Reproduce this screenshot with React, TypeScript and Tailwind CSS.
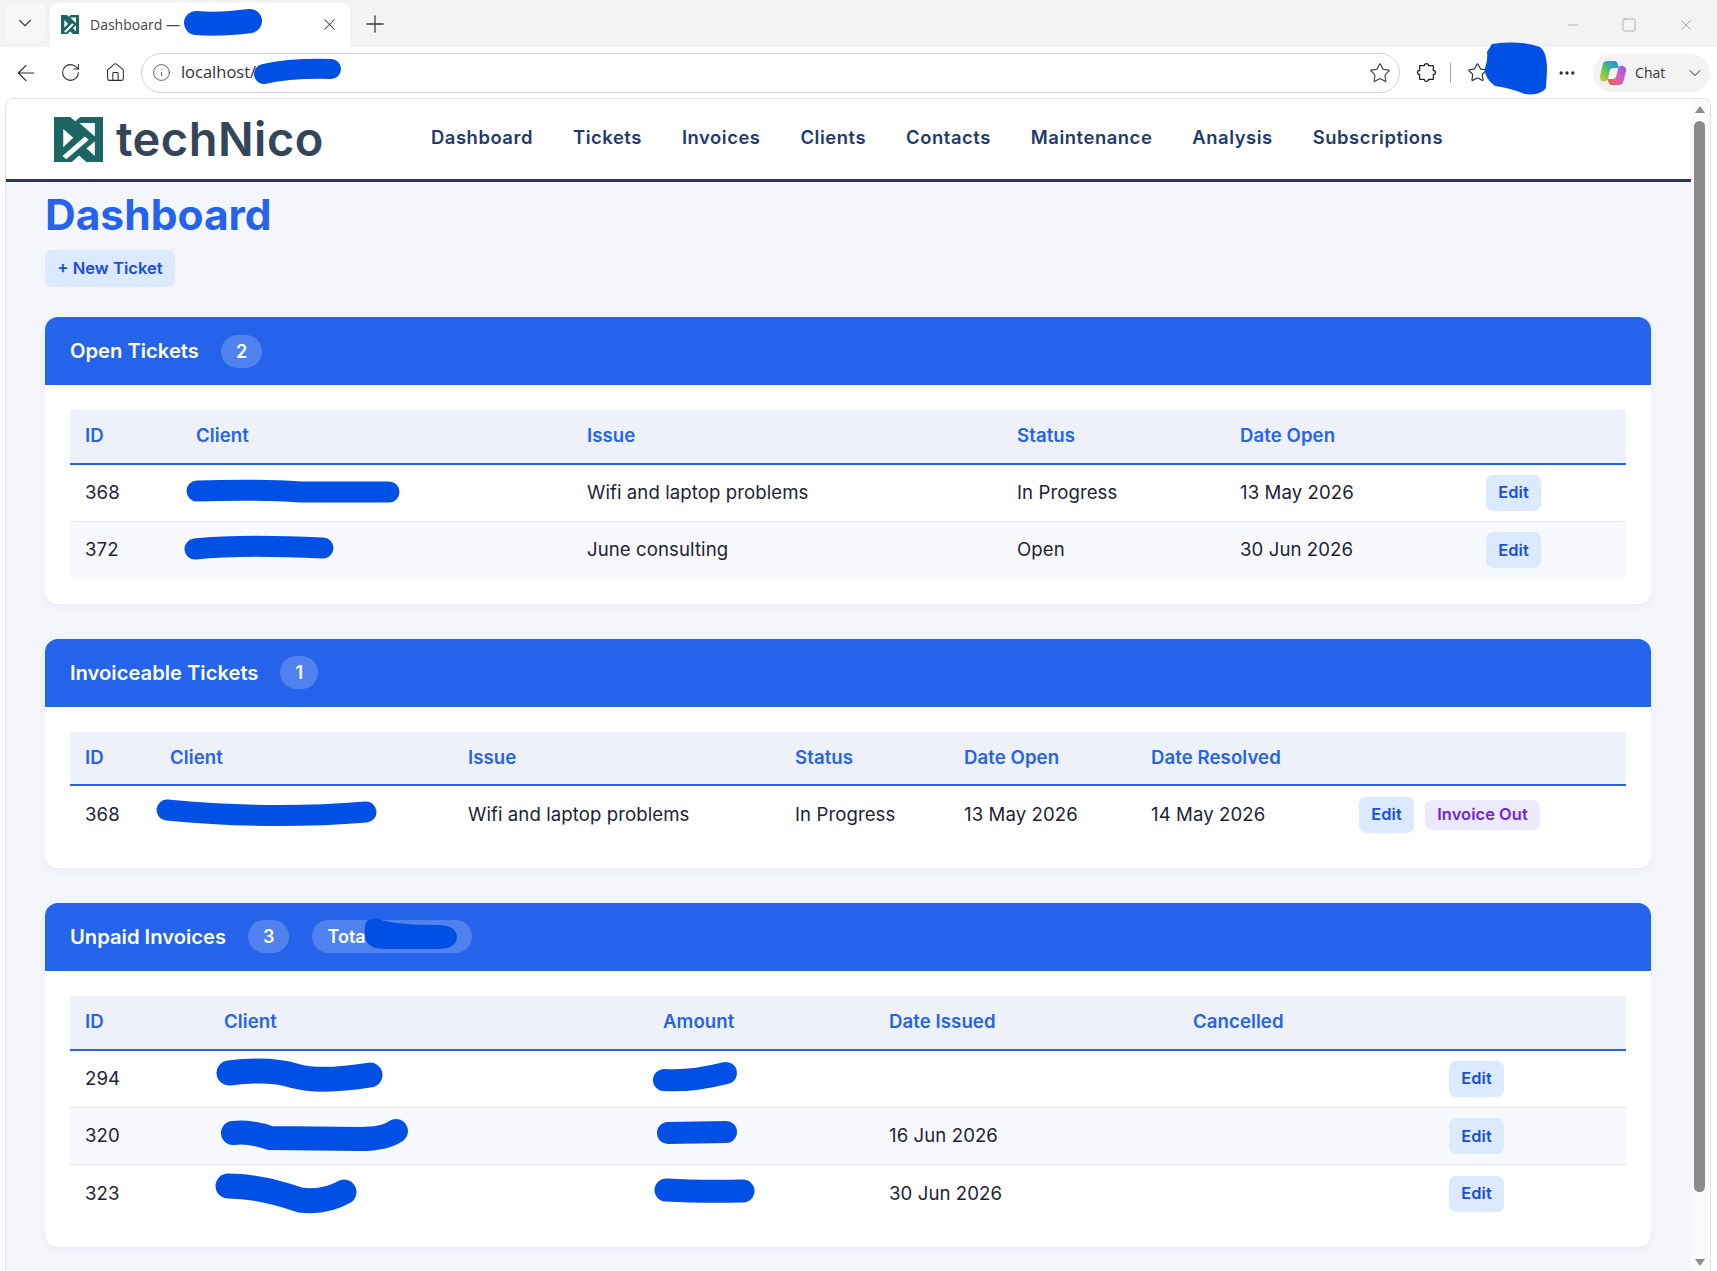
import { ArrowLeft, ChevronDown, Home, Info, Minus, MoreHorizontal, Plus, RotateCw, Square, Star, X } from 'lucide-react'

const NAV = ['Dashboard', 'Tickets', 'Invoices', 'Clients', 'Contacts', 'Maintenance', 'Analysis', 'Subscriptions']

function LogoMark({ className }: { className: string }) {
  return (
    <svg viewBox="0 0 127 134" preserveAspectRatio="none" className={className} fill="#ffffff">
      <rect width="127" height="134" fill="#1c6563" />
      <polygon points="42,0 68,0 55,13" />
      <polygon points="24,36 50,62 24,90" />
      <polygon points="22,116 80,58 90,68 32,126" />
      <polygon points="66,18 106,18 106,58" />
      <polygon points="106,72 106,116 84,94" />
      <polygon points="46,134 84,134 65,115" />
    </svg>
  )
}

function PuzzleIcon() {
  return (
    <svg viewBox="0 0 20 20" className="w-[21px] h-[21px]" fill="none" stroke="#1f1f1f" strokeWidth="1.15" strokeLinejoin="round">
      <path d="M8 3.500C8 .8 12 .8 12 3.500H16.500V8C19.200 8 19.200 12 16.500 12V16.500H12C12 19.200 8 19.200 8 16.500H3.500V12C.8 12 .8 8 3.500 8V3.500Z" />
    </svg>
  )
}

function CopilotIcon() {
  return (
    <svg viewBox="0 0 28 28" className="w-[28px] h-[28px]">
      <defs>
        <linearGradient id="cpL" x1="0" y1="1" x2="0.8" y2="0">
          <stop offset="0" stopColor="#f6c21c" />
          <stop offset="0.45" stopColor="#5fc75a" />
          <stop offset="1" stopColor="#1f8ee8" />
        </linearGradient>
        <linearGradient id="cpR" x1="1" y1="0" x2="0.1" y2="1">
          <stop offset="0" stopColor="#8f5be8" />
          <stop offset="0.5" stopColor="#d65cc4" />
          <stop offset="1" stopColor="#f0604a" />
        </linearGradient>
      </defs>
      <path d="M8 2h7.500c1.500 0 2.600 1 3 2.400L20 9h-5.500c-2 0-3.300 1-3.800 3L9 19.500c-.6 2-2 3-3.800 3C2.500 22.500.5 20 1 17L3.500 6C4 3.500 5.700 2 8 2z" fill="url(#cpL)" />
      <path d="M20 26h-7.500c-1.500 0-2.600-1-3-2.400L8.500 20h5c2 0 3.300-1 3.800-3l1.700-7c.5-2 2-3.200 3.800-3.200 2.800 0 4.700 2.500 4.200 5.200L24.500 22c-.5 2.500-2.200 4-4.500 4z" fill="url(#cpR)" />
    </svg>
  )
}

function TabStrip() {
  return (
    <div className="h-[47px] bg-[#f3f3f3] flex items-start pt-[3px] pl-[5px] pr-[22px] text-[#3b3b3b]">
      <div className="w-[40px] h-[40px] bg-[#f9f9f9] rounded-lg flex items-center justify-center">
        <ChevronDown className="w-[22px] h-[22px]" strokeWidth={1.2} />
      </div>
      <div className="ml-[5px] w-[300px] h-[44px] bg-white rounded-t-lg flex items-center pl-[11px] pr-[11px]">
        <LogoMark className="w-[18px] h-[19px] mb-[2px]" />
        <span className="ml-[11px] mb-[2px] text-[14px] font-['Open_Sans',sans-serif] text-[#444444]">Dashboard —</span>
        <X className="ml-auto mb-[2px] w-[19px] h-[19px]" strokeWidth={1.3} />
      </div>
      <Plus className="ml-[11px] mt-[7px] w-[28px] h-[28px]" strokeWidth={1.1} />
      <div className="ml-auto flex items-center h-[44px] gap-[40px] text-[#8f8f8f]">
        <Minus className="w-[16px] h-[16px]" strokeWidth={1} />
        <Square className="w-[16px] h-[16px]" strokeWidth={1} />
        <X className="w-[18px] h-[18px]" strokeWidth={1} />
      </div>
    </div>
  )
}

function Toolbar() {
  return (
    <div className="h-[51px] bg-white flex items-center pl-[13px] pr-[7px] text-[#2b2b2b]">
      <ArrowLeft className="w-[26px] h-[26px]" strokeWidth={1.05} />
      <RotateCw className="ml-[21px] w-[21px] h-[21px]" strokeWidth={1.2} />
      <Home className="ml-[24px] w-[21px] h-[21px]" strokeWidth={1.2} />
      <div className="ml-[15px] w-[1260px] h-[40px] rounded-full border border-[#d4d4d4] flex items-center pl-[10px] pr-[8px]">
        <Info className="w-[19px] h-[19px] text-[#555555]" strokeWidth={1.2} />
        <span className="ml-[10px] text-[16.500px] font-['Open_Sans',sans-serif] text-[#333333]">localhost/</span>
        <Star className="ml-auto w-[22px] h-[22px] text-[#3a3a3a]" strokeWidth={1.2} />
      </div>
      <div className="ml-[16px]">
        <PuzzleIcon />
      </div>
      <div className="ml-[13px] w-px h-[20px] bg-[#a8a8a8]" />
      <Star className="ml-[16px] w-[21px] h-[21px]" strokeWidth={1.3} />
      <MoreHorizontal className="ml-[69px] w-[20px] h-[20px]" strokeWidth={2} />
      <div className="ml-[16px] w-[117px] h-[38px] rounded-full bg-[#f3f3f3] flex items-center pl-[6px] pr-[5px]">
        <CopilotIcon />
        <span className="ml-[8px] text-[14px] font-['Open_Sans',sans-serif] text-[#333333]">Chat</span>
        <ChevronDown className="ml-auto w-[20px] h-[20px]" strokeWidth={1.2} />
      </div>
    </div>
  )
}

function SiteHeader() {
  return (
    <header className="h-[83px] shrink-0 bg-white border-b-[3px] border-[#1e3a6e] flex items-center pl-[48px]">
      <LogoMark className="w-[49px] h-[45px]" />
      <span className="ml-[13px] mb-[2px] w-[207px] text-[47px] leading-none font-semibold text-[#344558] tracking-[0.01em] whitespace-nowrap">techNico</span>
      <nav className="ml-[108px] flex gap-[40px] text-[18.4px] font-semibold text-[#1e3a6e] tracking-[0.03em] mb-[3px]">
        {NAV.map((item) => (
          <span key={item}>{item}</span>
        ))}
      </nav>
    </header>
  )
}

function Badge({ children, wide }: { children: React.ReactNode; wide?: boolean }) {
  return (
    <span className={`h-[33px] rounded-full bg-white/20 flex items-center text-[18px] font-semibold text-white ${wide ? 'w-[160px] px-[15px] ml-[1px]' : 'px-[15px]'}`}>
      {children}
    </span>
  )
}

function Card({ title, badges, children }: { title: string; badges: React.ReactNode; children: React.ReactNode }) {
  return (
    <section className="mb-[35px] rounded-[13px] bg-white shadow-[0_2px_10px_rgba(30,50,100,0.06)] overflow-hidden">
      <div className="h-[68px] bg-[#2563eb] px-[25px] flex items-center gap-[22px]">
        <h2 className="text-[20.2px] font-semibold text-white">{title}</h2>
        {badges}
      </div>
      <div className="p-[25px]">{children}</div>
    </section>
  )
}

function Edit() {
  return (
    <button className="w-[55px] h-[36px] rounded-[7px] bg-[#dbeafe] text-[16.400px] font-semibold text-[#1d4ed8]">Edit</button>
  )
}

function InvoiceOut() {
  return (
    <button className="ml-[11px] w-[115px] h-[30px] rounded-[7px] bg-[#ede9fe] text-[16.400px] font-semibold text-[#6d28d9]">Invoice Out</button>
  )
}

function DataTable({ cols, heads, rows }: { cols: number[]; heads: string[]; rows: React.ReactNode[][] }) {
  return (
    <table className="w-full table-fixed border-collapse text-[18.6px] tracking-[0.08px] text-[#1e2433]">
      <colgroup>
        {cols.map((w, i) => (
          <col key={i} style={{ width: w }} />
        ))}
      </colgroup>
      <thead>
        <tr className="h-[53.7px] bg-[#eef1f9] border-b-2 border-[#2563eb]">
          {heads.map((h, i) => (
            <th key={i} className="pl-[15px] text-left font-semibold text-[#2563eb]">{h}</th>
          ))}
        </tr>
      </thead>
      <tbody>
        {rows.map((row, r) => (
          <tr key={r} className={`h-[57.5px] ${r % 2 ? 'bg-[#f8f9fd]' : ''} ${r < rows.length - 1 ? 'border-b border-[#e2e6f0]' : ''}`}>
            {row.map((cell, c) => (
              <td key={c} className="pl-[15px]">{cell}</td>
            ))}
          </tr>
        ))}
      </tbody>
    </table>
  )
}

// the blue scribbles drawn over private values in the screenshot
function Redactions() {
  const strokes = [
    { d: 'M196 23 Q220 25 250 21', w: 24 },
    { d: 'M264 74 Q290 68 331 69', w: 20 },
    { d: 'M197 491 Q260 489 300 492 L389 492', w: 21 },
    { d: 'M195 549 Q240 544 323 548', w: 21 },
    { d: 'M167 810 Q270 820 366 812', w: 21 },
    { d: 'M229 1073 Q270 1068 295 1076 Q320 1083 370 1075', w: 25 },
    { d: 'M664 1080 Q690 1082 726 1073', w: 22 },
    { d: 'M233 1133 Q250 1131 270 1138 L360 1139 Q385 1139 396 1131', w: 24 },
    { d: 'M668 1133 L726 1132', w: 22 },
    { d: 'M228 1186 Q260 1186 300 1200 Q325 1203 344 1192', w: 25 },
    { d: 'M666 1190 Q700 1192 743 1191', w: 23 },
  ]
  return (
    <svg viewBox="0 0 1717 1271" className="absolute inset-0 w-[1717px] h-[1271px] pointer-events-none" fill="none" stroke="#0050e6" strokeLinecap="round">
      {strokes.map((s) => (
        <path key={s.d} d={s.d} strokeWidth={s.w} />
      ))}
      <path d="M1492 44 Q1520 40 1540 47 Q1547 52 1547 70 L1546 88 Q1540 96 1525 94 Q1510 88 1495 86 Q1484 78 1485 68 Q1488 60 1487 52 Z" fill="#0050e6" stroke="none" />
      <path d="M365 926 Q366 917 378 919 Q395 925 440 925 Q457 926 457 938 Q455 949 438 949 L385 949 Q368 949 365 938 Z" fill="#0050e6" stroke="none" />
    </svg>
  )
}

export default function App() {
  return (
    <div className="relative w-[1717px] h-[1271px] overflow-hidden bg-white font-['Inter',sans-serif]">
      <TabStrip />
      <Toolbar />
      <div className="ml-[5px] mr-[6px] h-[1173px] flex rounded-t-lg border border-b-0 border-[#e3e3e3] overflow-hidden">
        <div className="flex-1 min-w-0 bg-[#f4f6fb] flex flex-col">
          <SiteHeader />
          <main className="pl-[39px] pr-[40px]">
            <h1 className="mt-[8px] text-[42.5px] leading-[50px] font-bold text-[#2563eb]">Dashboard</h1>
            <button className="mt-[10px] mb-[30px] block w-[130px] h-[37px] rounded-[7px] bg-[#dbeafe] text-[16.600px] font-semibold text-[#1d4ed8]">+ New Ticket</button>
            <Card title="Open Tickets" badges={<Badge>2</Badge>}>
              <DataTable
                cols={[111, 391, 430, 223, 246, 155]}
                heads={['ID', 'Client', 'Issue', 'Status', 'Date Open', '']}
                rows={[
                  ['368', '', 'Wifi and laptop problems', 'In Progress', '13 May 2026', <Edit />],
                  ['372', '', 'June consulting', 'Open', '30 Jun 2026', <Edit />],
                ]}
              />
            </Card>
            <Card title="Invoiceable Tickets" badges={<Badge>1</Badge>}>
              <DataTable
                cols={[85, 298, 327, 169, 187, 208, 282]}
                heads={['ID', 'Client', 'Issue', 'Status', 'Date Open', 'Date Resolved', '']}
                rows={[
                  ['368', '', 'Wifi and laptop problems', 'In Progress', '13 May 2026', '14 May 2026', (
                    <span className="flex items-center">
                      <Edit />
                      <InvoiceOut />
                    </span>
                  )],
                ]}
              />
            </Card>
            <Card title="Unpaid Invoices" badges={<><Badge>3</Badge><Badge wide>Total</Badge></>}>
              <DataTable
                cols={[139, 439, 226, 304, 256, 192]}
                heads={['ID', 'Client', 'Amount', 'Date Issued', 'Cancelled', '']}
                rows={[
                  ['294', '', '', '', '', <Edit />],
                  ['320', '', '', '16 Jun 2026', '', <Edit />],
                  ['323', '', '', '30 Jun 2026', '', <Edit />],
                ]}
              />
            </Card>
          </main>
        </div>
        <div className="relative w-[19px] shrink-0 bg-[#fafafa]">
          <span className="absolute left-[4px] top-[7px] w-0 h-0 border-x-[5px] border-x-transparent border-b-[7px] border-b-[#8b8b8b]" />
          <div className="absolute left-[3px] top-[22px] w-[11px] h-[1071px] rounded-full bg-[#8b8b8b]" />
          <span className="absolute left-[4px] bottom-[5px] w-0 h-0 border-x-[5px] border-x-transparent border-t-[7px] border-t-[#8b8b8b]" />
        </div>
      </div>
      <Redactions />
    </div>
  )
}
